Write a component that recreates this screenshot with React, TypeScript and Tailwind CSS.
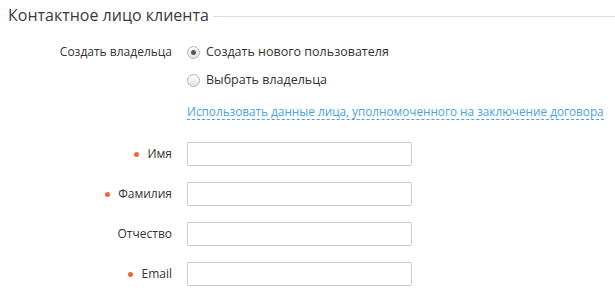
const fields = [
  { label: 'Имя', required: true },
  { label: 'Фамилия', required: true },
  { label: 'Отчество', required: false },
  { label: 'Email', required: true },
];

function Radio({ checked, label }: { checked?: boolean; label: string }) {
  return (
    <label className="flex h-[28px] items-center gap-[6px]">
      <span className="flex h-[13px] w-[13px] items-center justify-center rounded-full border border-[#b3b3b3] bg-gradient-to-b from-[#ffffff] to-[#e4e4e4]">
        {checked && <span className="h-[5px] w-[5px] rounded-full bg-[#555555]" />}
      </span>
      <span className="text-[12.5px]">{label}</span>
    </label>
  );
}

export default function App() {
  return (
    <div className="h-[297px] w-[615px] overflow-hidden bg-white font-['Open_Sans',sans-serif] text-[12px] text-[#333333]">
      <div className="flex h-[30px] items-center pl-[8px]">
        <h2 className="text-[16px] leading-[30px] text-[#3a3a3a]">Контактное лицо клиента</h2>
        <div className="ml-[4px] mt-[3px] h-px flex-1 bg-[#d6dce5]" />
      </div>

      <div className="mt-[8px] grid grid-cols-[172px_1fr] gap-x-[15px]">
        <div className="flex h-[28px] items-center justify-end">Создать владельца</div>
        <div>
          <Radio checked label="Создать нового пользователя" />
          <Radio label="Выбрать владельца" />
          <div className="mt-[4px] flex h-[28px] items-center">
            <a className="border-b border-dashed border-[#4aa3df] text-[11.75px] leading-[15px] text-[#4aa3df]">
              Использовать данные лица, уполномоченного на заключение договора
            </a>
          </div>
        </div>
      </div>

      <div className="mt-[16px] flex flex-col gap-[16px]">
        {fields.map((f) => (
          <div key={f.label} className="grid grid-cols-[172px_1fr] gap-x-[15px]">
            <div className="flex h-[24px] items-center justify-end gap-[8px]">
              {f.required && <span className="h-[5px] w-[5px] rounded-full bg-[#f2653a]" />}
              <span>{f.label}</span>
            </div>
            <input className="h-[24px] w-[225px] rounded-[2px] border border-[#c7ccd4] bg-white px-2 outline-none" />
          </div>
        ))}
      </div>
    </div>
  );
}
